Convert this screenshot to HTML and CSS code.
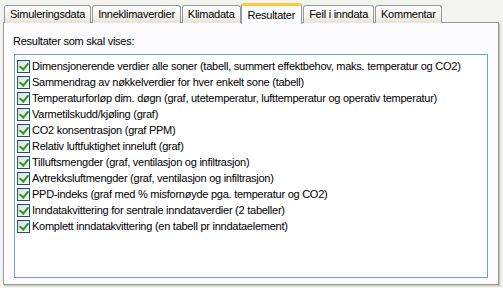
FILE: index.html
```html
<!DOCTYPE html>
<html>
<head>
	<meta charset="utf-8">
	<title>Resultater</title>
	<link rel="stylesheet" href="styles.css">
</head>
<body>

	<div class="tabs">
		<div class="tab">Simuleringsdata</div>
		<div class="tab">Inneklimaverdier</div>
		<div class="tab">Klimadata</div>
		<div class="tab active">Resultater</div>
		<div class="tab">Feil i inndata</div>
		<div class="tab">Kommentar</div>
	</div>

	<div class="panel">
		<div class="caption">Resultater som skal vises:</div>
		<div class="list">
			<label class="item"><span class="box"></span>Dimensjonerende verdier alle soner (tabell, summert effektbehov, maks. temperatur og CO2)</label>
			<label class="item"><span class="box"></span>Sammendrag av nøkkelverdier for hver enkelt sone (tabell)</label>
			<label class="item"><span class="box"></span>Temperaturforløp dim. døgn (graf, utetemperatur, lufttemperatur og operativ temperatur)</label>
			<label class="item"><span class="box"></span>Varmetilskudd/kjøling (graf)</label>
			<label class="item"><span class="box"></span>CO2 konsentrasjon (graf PPM)</label>
			<label class="item"><span class="box"></span>Relativ luftfuktighet inneluft (graf)</label>
			<label class="item"><span class="box"></span>Tilluftsmengder (graf, ventilasjon og infiltrasjon)</label>
			<label class="item"><span class="box"></span>Avtrekksluftmengder (graf, ventilasjon og infiltrasjon)</label>
			<label class="item"><span class="box"></span>PPD-indeks (graf med % misfornøyde pga. temperatur og CO2)</label>
			<label class="item"><span class="box"></span>Inndatakvittering for sentrale inndataverdier (2 tabeller)</label>
			<label class="item"><span class="box"></span>Komplett inndatakvittering (en tabell pr inndataelement)</label>
		</div>
	</div>

</body>
</html>
```

FILE: styles.css
```css
* {
	padding: 0;
	margin: 0;
	box-sizing: border-box;
}
body {
	background-color: #f3f3ef;
	font-family: "Liberation Sans", Arial, sans-serif;
	font-size: 11px;
	letter-spacing: -0.25px;
	color: #000;
	width: 503px;
	height: 288px;
	overflow: hidden;
}

/* tab strip */
.tabs {
	display: flex;
	align-items: flex-end;
	height: 23px;
	padding-left: 4px;
	position: relative;
	z-index: 1;
}
.tab {
	height: 18px;
	line-height: 16px;
	padding: 0 5px;
	margin-right: 1px;
	border: 1px solid #919b9c;
	border-bottom: none;
	border-radius: 3px 3px 0 0;
	background: linear-gradient(#fefefe, #f4f3ee 60%, #e6e3d6);
}
.tab.active {
	height: 21px;
	line-height: 18px;
	padding: 0 6px;
	margin: 0 1px 0 -1px;
	background: #fcfcfe;
	border-top: 3px solid #ffc83c;
	border-radius: 3px 3px 0 0;
	margin-bottom: -1px;
}

/* panel */
.panel {
	margin: -1px 4px 0 3px;
	height: 263px;
	background-color: #fcfcfe;
	border: 1px solid #919b9c;
	box-shadow: 1px 1px 0 #c8c7bf, 2px 2px 0 #e2e1da;
	padding: 12px 9px 0 9px;
}
.caption {
	height: 19px;
	line-height: 13px;
}
.list {
	height: 224px;
	margin-left: 1px;
	margin-right: 1px;
	background-color: #fff;
	border: 1px solid #7f9db9;
	padding: 3px 0 0 2px;
}
.item {
	display: flex;
	align-items: center;
	height: 16px;
	white-space: nowrap;
}
.box {
	display: inline-block;
	position: relative;
	width: 13px;
	height: 13px;
	margin-right: 2px;
	border: 1px solid #1c5180;
	background: linear-gradient(135deg, #dcdcd7, #fff);
}
.box::after {
	content: '';
	position: absolute;
	left: 2px;
	top: 1px;
	width: 4px;
	height: 7px;
	border-right: 2px solid #21a121;
	border-bottom: 2px solid #21a121;
	transform: translate(1px, -1px) rotate(40deg);
}
```
